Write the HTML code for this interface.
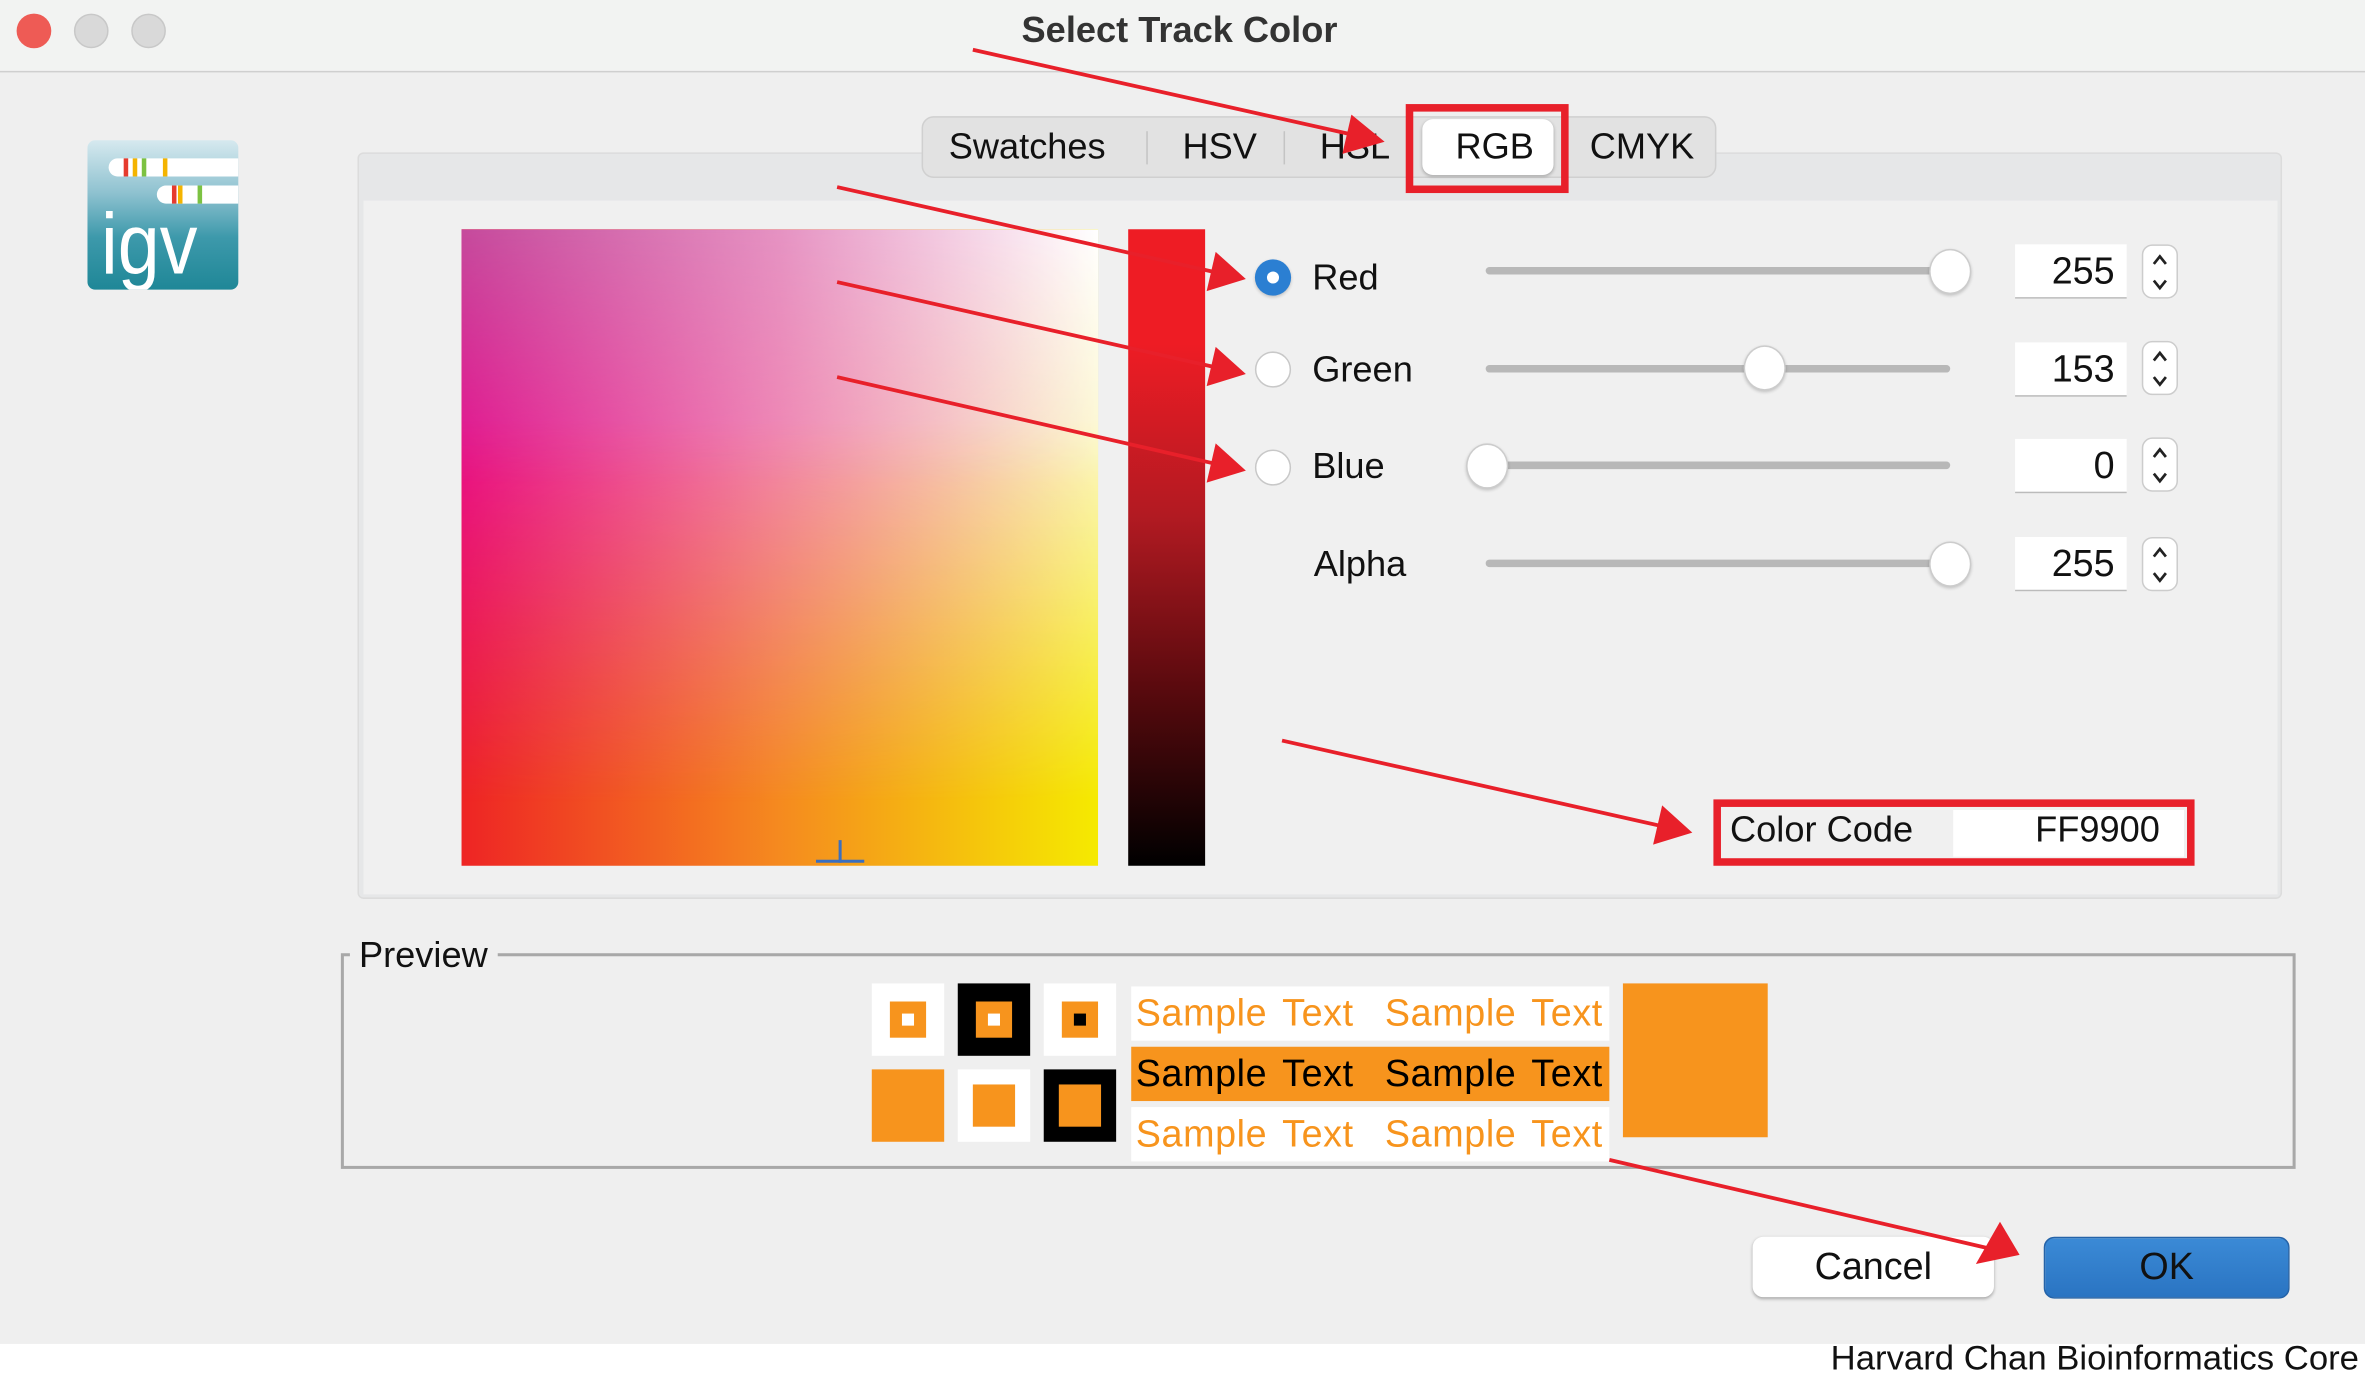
<!DOCTYPE html>
<html><head><meta charset="utf-8">
<style>
html,body{margin:0;padding:0;width:2365px;height:1382px;overflow:hidden;background:#fff}
#s{position:absolute;left:0;top:0;width:1568px;height:916.3px;transform:scale(1.50829);transform-origin:0 0;font-family:"Liberation Sans",sans-serif;color:#111}
.a{position:absolute}
.t{font-size:24px;line-height:1}
.dot{position:absolute;width:23px;height:23px;border-radius:50%}
.radio{position:absolute;width:24px;height:24px;border-radius:50%;background:#fff;border:1px solid #c8c8c8;box-sizing:border-box}
.track{position:absolute;height:5px;background:#b8b8b8;border-radius:3px}
.thumb{position:absolute;width:28px;height:30px;border-radius:50%;background:#fff;border:1px solid #ccc;box-sizing:border-box;box-shadow:0 1px 2px rgba(0,0,0,.2)}
.num{position:absolute;width:74px;height:36px;background:#fff;border-bottom:1px solid #bbb;box-sizing:border-box;text-align:right;padding-right:8px;font-size:25px;line-height:36px}
.spin{position:absolute;width:24px;height:36px;background:#fff;border:1px solid #ccc;border-radius:7px;box-sizing:border-box}
.spin svg{position:absolute;left:5px;top:4px}
.sq{position:absolute;width:48px;height:48px}
.st{position:absolute;height:36px;font-size:25px;line-height:36px;color:#f7941d;white-space:pre;letter-spacing:0.4px;word-spacing:3px}
</style></head><body>
<div id="s">
  <div class="a" style="left:0;top:0;width:1568px;height:891px;background:#efefef"></div>
  <div class="a" style="left:0;top:0;width:1568px;height:47px;background:#f2f3f2;border-bottom:1px solid #cfcfcf"></div>
  <div class="dot" style="left:11px;top:9px;background:#ee5b55"></div>
  <div class="dot" style="left:49px;top:9px;background:#d9d9d9;border:1px solid #c8c8c8;box-sizing:border-box"></div>
  <div class="dot" style="left:87px;top:9px;background:#d9d9d9;border:1px solid #c8c8c8;box-sizing:border-box"></div>
  <div class="a" style="left:0;top:7px;width:1564px;text-align:center;font-weight:bold;font-size:24px;color:#333">Select Track Color</div>

  <!-- logo -->
  <div class="a" style="left:58px;top:93px;width:100px;height:99px;border-radius:5px;background:linear-gradient(to bottom,#d6e9ef 0%,#8fc2d0 35%,#3d99ab 65%,#1f8797 100%);overflow:hidden">
    <div class="a" style="left:14px;top:12px;width:86px;height:12px;background:#fff;border-radius:6px 0 0 6px"></div>
    <div class="a" style="left:24px;top:12px;width:3px;height:12px;background:#e63b2e"></div>
    <div class="a" style="left:30px;top:12px;width:3px;height:12px;background:#f4b400"></div>
    <div class="a" style="left:36px;top:12px;width:3px;height:12px;background:#7cc242"></div>
    <div class="a" style="left:50px;top:12px;width:3px;height:12px;background:#f4b400"></div>
    <div class="a" style="left:46px;top:30px;width:54px;height:12px;background:#fff;border-radius:6px 0 0 6px"></div>
    <div class="a" style="left:56px;top:30px;width:3px;height:12px;background:#e63b2e"></div>
    <div class="a" style="left:60px;top:30px;width:3px;height:12px;background:#f4b400"></div>
    <div class="a" style="left:73px;top:30px;width:3px;height:12px;background:#7cc242"></div>
    <div class="a" style="left:9px;top:40px;color:#fff;font-size:50px;line-height:1;transform:scaleY(1.15);transform-origin:0 0">igv</div>
  </div>

  <!-- panel -->
  <div class="a" style="left:237px;top:101px;width:1276px;height:495px;background:#e6e7e8;border:1px solid #dcdcdc;border-radius:4px;box-sizing:border-box"></div>
  <div class="a" style="left:241px;top:133px;width:1269px;height:460px;background:#f0f0f0"></div>

  <!-- tabs -->
  <div class="a" style="left:611px;top:77px;width:527px;height:41px;background:#e2e2e2;border:1px solid #d0d0d0;border-radius:8px;box-sizing:border-box"></div>
  <div class="a" style="left:943px;top:79px;width:87px;height:37px;background:#fff;border-radius:7px;box-shadow:0 1px 2px rgba(0,0,0,.25)"></div>
  <div class="a" style="left:760px;top:87px;width:1px;height:22px;background:#c4c4c4"></div>
  <div class="a" style="left:851px;top:87px;width:1px;height:22px;background:#c4c4c4"></div>
  <div class="a t" style="left:629px;top:86px">Swatches</div>
  <div class="a t" style="left:784px;top:86px">HSV</div>
  <div class="a t" style="left:875px;top:86px">HSL</div>
  <div class="a t" style="left:965px;top:86px">RGB</div>
  <div class="a t" style="left:1054px;top:86px">CMYK</div>
  <div class="a" style="left:932px;top:69px;width:108px;height:59px;border:5px solid #e8202a;box-sizing:border-box"></div>

  <!-- gradient square -->
  <div class="a" style="left:306px;top:152px;width:422px;height:422px;background:linear-gradient(to right,#ee2424 0%,#f58a1f 50%,#f5ea00 100%)"></div>
  <div class="a" style="left:306px;top:152px;width:422px;height:422px;background:linear-gradient(to right,#e8108e 0%,#f07ab0 45%,#fbf6c8 100%);-webkit-mask-image:linear-gradient(to bottom,#000 30%,rgba(0,0,0,.6) 55%,transparent 90%);mask-image:linear-gradient(to bottom,#000 30%,rgba(0,0,0,.6) 55%,transparent 90%)"></div>
  <div class="a" style="left:306px;top:152px;width:422px;height:422px;background:linear-gradient(to right,#c54a9c 0%,#e592c2 50%,#fff 100%);-webkit-mask-image:linear-gradient(to bottom,#000 0%,transparent 40%);mask-image:linear-gradient(to bottom,#000 0%,transparent 40%)"></div>
  <div class="a" style="left:541px;top:570px;width:32px;height:2px;background:#3a6fc0"></div>
  <div class="a" style="left:556px;top:557px;width:2px;height:15px;background:#3a6fc0"></div>

  <!-- vertical bar -->
  <div class="a" style="left:748px;top:152px;width:51px;height:422px;background:linear-gradient(to bottom,#ee1c24 0%,#ee1c24 18%,#b21a22 45%,#5a0a0e 72%,#000 100%)"></div>

  <!-- radios -->
  <div class="a" style="left:832px;top:172px;width:24px;height:24px;border-radius:50%;background:#2b7fd2;box-shadow:0 1px 2px rgba(0,0,0,.2)"><div class="a" style="left:8px;top:8px;width:8px;height:8px;border-radius:50%;background:#fff"></div></div>
  <div class="radio" style="left:832px;top:233px"></div>
  <div class="radio" style="left:832px;top:298px"></div>
  <div class="a t" style="left:870px;top:173px">Red</div>
  <div class="a t" style="left:870px;top:234px">Green</div>
  <div class="a t" style="left:870px;top:298px">Blue</div>
  <div class="a t" style="left:871px;top:363px">Alpha</div>

  <!-- sliders -->
  <div class="track" style="left:985px;top:177px;width:308px"></div>
  <div class="thumb" style="left:1279px;top:165px"></div>
  <div class="track" style="left:985px;top:242px;width:308px"></div>
  <div class="thumb" style="left:1156px;top:229px"></div>
  <div class="track" style="left:985px;top:306px;width:308px"></div>
  <div class="thumb" style="left:972px;top:294px"></div>
  <div class="track" style="left:985px;top:371px;width:308px"></div>
  <div class="thumb" style="left:1279px;top:359px"></div>

  <div class="num" style="left:1336px;top:162px">255</div>
  <div class="num" style="left:1336px;top:227px">153</div>
  <div class="num" style="left:1336px;top:291px">0</div>
  <div class="num" style="left:1336px;top:356px">255</div>
  <div class="spin" style="left:1420px;top:162px"><svg width="12" height="28"><path d="M2 8 L6 3 L10 8 M2 19 L6 24 L10 19" stroke="#222" stroke-width="1.8" fill="none"/></svg></div>
  <div class="spin" style="left:1420px;top:226px"><svg width="12" height="28"><path d="M2 8 L6 3 L10 8 M2 19 L6 24 L10 19" stroke="#222" stroke-width="1.8" fill="none"/></svg></div>
  <div class="spin" style="left:1420px;top:290px"><svg width="12" height="28"><path d="M2 8 L6 3 L10 8 M2 19 L6 24 L10 19" stroke="#222" stroke-width="1.8" fill="none"/></svg></div>
  <div class="spin" style="left:1420px;top:356px"><svg width="12" height="28"><path d="M2 8 L6 3 L10 8 M2 19 L6 24 L10 19" stroke="#222" stroke-width="1.8" fill="none"/></svg></div>

  <!-- color code -->
  <div class="a" style="left:1295px;top:537px;width:153px;height:31px;background:#fff"></div>
  <div class="a t" style="left:1147px;top:539px">Color Code</div>
  <div class="a t" style="left:1300px;top:539px;width:132px;text-align:right">FF9900</div>
  <div class="a" style="left:1136px;top:530px;width:319px;height:44px;border:5px solid #e8202a;box-sizing:border-box"></div>

  <!-- preview -->
  <div class="a" style="left:226px;top:632px;width:1296px;height:143px;border:2px solid #a8a8a8;box-sizing:border-box"></div>
  <div class="a" style="left:232px;top:622px;width:98px;height:24px;background:#efefef"></div>
  <div class="a t" style="left:238px;top:622px">Preview</div>

  <div class="sq" style="left:578px;top:652px;background:#fff"><div class="a" style="left:12px;top:12px;width:24px;height:24px;background:#f7941d"></div><div class="a" style="left:20px;top:20px;width:8px;height:8px;background:#fff"></div></div>
  <div class="sq" style="left:635px;top:652px;background:#000"><div class="a" style="left:12px;top:12px;width:24px;height:24px;background:#f7941d"></div><div class="a" style="left:20px;top:20px;width:8px;height:8px;background:#fff"></div></div>
  <div class="sq" style="left:692px;top:652px;background:#fff"><div class="a" style="left:12px;top:12px;width:24px;height:24px;background:#f7941d"></div><div class="a" style="left:20px;top:20px;width:8px;height:8px;background:#000"></div></div>
  <div class="sq" style="left:578px;top:709px;background:#f7941d"></div>
  <div class="sq" style="left:635px;top:709px;background:#fff"><div class="a" style="left:10px;top:10px;width:28px;height:28px;background:#f7941d"></div></div>
  <div class="sq" style="left:692px;top:709px;background:#000"><div class="a" style="left:10px;top:10px;width:28px;height:28px;background:#f7941d"></div></div>

  <div class="st" style="left:750px;top:654px;width:317px;background:#fff;padding-left:3px;box-sizing:border-box">Sample Text  Sample Text</div>
  <div class="st" style="left:750px;top:694px;width:317px;background:#f7941d;color:#000;padding-left:3px;box-sizing:border-box">Sample Text  Sample Text</div>
  <div class="st" style="left:750px;top:734px;width:317px;background:#fff;padding-left:3px;box-sizing:border-box">Sample Text  Sample Text</div>
  <div class="a" style="left:1076px;top:652px;width:96px;height:102px;background:#f7941d"></div>

  <!-- buttons -->
  <div class="a" style="left:1162px;top:820px;width:160px;height:40px;background:#fff;border-radius:7px;box-shadow:0 1px 2px rgba(0,0,0,.3);text-align:center;font-size:25px;line-height:40px">Cancel</div>
  <div class="a" style="left:1355px;top:820px;width:163px;height:41px;background:linear-gradient(#3b8ad6,#2a74c2);border:1px solid #2563a8;box-sizing:border-box;border-radius:7px;text-align:center;font-size:25px;line-height:39px">OK</div>

  <div class="a" style="right:4px;top:886px;font-size:23px;line-height:28px;color:#111">Harvard Chan Bioinformatics Core</div>

  <!-- arrows -->
  <svg class="a" style="left:0;top:0" width="1568" height="916" viewBox="0 0 1568 916">
    <g stroke="#e8202a" stroke-width="2.5" fill="#e8202a">
      <line x1="645" y1="33" x2="900" y2="90"/><polygon points="918,94 896,76 890,102" stroke="none"/>
      <line x1="555" y1="124" x2="808" y2="181"/><polygon points="826,185 806,167 800,193" stroke="none"/>
      <line x1="555" y1="187" x2="808" y2="244"/><polygon points="826,248 806,230 800,256" stroke="none"/>
      <line x1="555" y1="250" x2="808" y2="308"/><polygon points="826,312 806,294 800,320" stroke="none"/>
      <line x1="850" y1="491" x2="1103" y2="548"/><polygon points="1122,552 1102,534 1096,560" stroke="none"/>
      <line x1="1067" y1="769" x2="1320" y2="828"/><polygon points="1339,832 1326,810 1310,838" stroke="none"/>
    </g>
  </svg>
</div>
</body></html>
